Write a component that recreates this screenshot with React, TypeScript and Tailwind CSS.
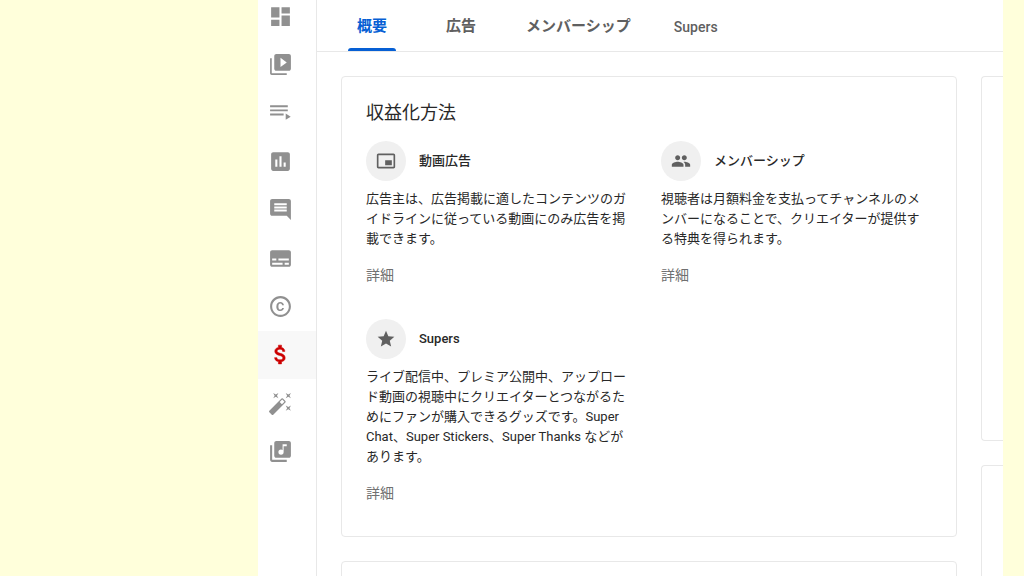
import React, { useState } from 'react';
import type { IconType } from 'react-icons';
import {
  MdAssessment,
  MdAutoFixHigh,
  MdComment,
  MdCopyright,
  MdDashboard,
  MdGroup,
  MdLibraryMusic,
  MdPictureInPictureAlt,
  MdStar,
  MdSubtitles,
} from 'react-icons/md';

interface NavItem {
  id: string;
  label: string;
  icon: React.ReactNode;
}

interface Method {
  title: string;
  description: string;
  icon: IconType;
}

// Stacked frames with a play arrow
const ContentIcon = () => (
  <svg viewBox="0 0 24 24" className="size-[25px]" fill="currentColor">
    <path d="M3.6 6H2v14.4c0 .9.7 1.6 1.6 1.6H18v-1.6H3.6V6z" />
    <path d="M20 2H8c-1.1 0-2 .9-2 2v12c0 1.1.9 2 2 2h12c1.1 0 2-.9 2-2V4c0-1.1-.9-2-2-2zm-8 12.5v-9l6 4.5-6 4.5z" />
  </svg>
);

// Three lines and a small arrow in the corner
const PlaylistIcon = () => (
  <svg viewBox="0 0 24 24" className="size-[25px]" fill="currentColor">
    <path d="M2 5h17v1.9H2zM2 9h17v1.9H2zM2 13h13v1.9H2zM17 13v6l4.8-3z" />
  </svg>
);

const DollarIcon = () => (
  <svg viewBox="0 0 24 24" className="size-[25px]" fill="currentColor" stroke="currentColor" strokeWidth="0.5">
    <path d="M11.8 10.9c-2.27-.59-3-1.2-3-2.15 0-1.09 1.01-1.85 2.7-1.85 1.78 0 2.44.85 2.5 2.1h2.21c-.07-1.72-1.12-3.3-3.21-3.81V3h-3v2.16c-1.94.42-3.5 1.68-3.5 3.61 0 2.31 1.91 3.46 4.7 4.13 2.5.6 3 1.48 3 2.41 0 .69-.49 1.79-2.7 1.79-2.06 0-2.87-.92-2.98-2.1h-2.2c.12 2.19 1.76 3.42 3.68 3.83V21h3v-2.15c1.95-.37 3.5-1.5 3.5-3.55 0-2.84-2.43-3.81-4.7-4.4z" />
  </svg>
);

const navItems: NavItem[] = [
  { id: 'dashboard', label: 'ダッシュボード', icon: <MdDashboard size={25} /> },
  { id: 'content', label: 'コンテンツ', icon: <ContentIcon /> },
  { id: 'playlists', label: '再生リスト', icon: <PlaylistIcon /> },
  { id: 'analytics', label: 'アナリティクス', icon: <MdAssessment size={25} /> },
  { id: 'comments', label: 'コメント', icon: <MdComment size={25} /> },
  { id: 'subtitles', label: '字幕', icon: <MdSubtitles size={25} /> },
  { id: 'copyright', label: '著作権', icon: <MdCopyright size={25} /> },
  { id: 'earn', label: '収益化', icon: <DollarIcon /> },
  { id: 'customize', label: 'カスタマイズ', icon: <MdAutoFixHigh size={25} /> },
  { id: 'audio', label: 'オーディオ ライブラリ', icon: <MdLibraryMusic size={25} /> },
];

const tabs = [
  { name: '概要', font: 'text-[15px] font-bold' },
  { name: '広告', font: 'text-[15px] font-bold' },
  { name: 'メンバーシップ', font: 'text-[15px] font-bold' },
  { name: 'Supers', font: 'text-sm font-medium' },
];

const methods: Method[] = [
  {
    title: '動画広告',
    description: '広告主は、広告掲載に適したコンテンツのガイドラインに従っている動画にのみ広告を掲載できます。',
    icon: MdPictureInPictureAlt,
  },
  {
    title: 'メンバーシップ',
    description: '視聴者は月額料金を支払ってチャンネルのメンバーになることで、クリエイターが提供する特典を得られます。',
    icon: MdGroup,
  },
  {
    title: 'Supers',
    description:
      'ライブ配信中、プレミア公開中、アップロード動画の視聴中にクリエイターとつながるためにファンが購入できるグッズです。Super Chat、Super Stickers、Super Thanks などがあります。',
    icon: MdStar,
  },
];

const Sidebar = () => (
  <nav className="w-[59px] shrink-0 border-r border-[#e8e8e8]">
    <div className="-mt-2 grid h-[484px] grid-rows-10">
      {navItems.map((item) => (
        <a
          key={item.id}
          href={`#${item.id}`}
          aria-label={item.label}
          className={
            item.id === 'earn'
              ? 'flex items-center bg-[#f8f8f8] pl-[10px] text-[#cc0000]'
              : 'flex items-center pl-[10px] text-[#909090]'
          }
        >
          {item.icon}
        </a>
      ))}
    </div>
  </nav>
);

const MethodItem: React.FC<{ method: Method }> = ({ method }) => {
  const Icon = method.icon;

  return (
    <article className="pb-[9px]">
      <div className="flex items-center gap-[13px]">
        <span className="flex size-10 items-center justify-center rounded-full bg-[#f0f0f0] text-[#606060]">
          <Icon size={20} />
        </span>
        <h3 className="text-[13px] leading-5 font-medium">{method.title}</h3>
      </div>
      <p className="mt-2 text-[13px] leading-5">{method.description}</p>
      <a href="#details" className="mt-4 inline-block align-top text-sm leading-5 text-[#707070]">
        詳細
      </a>
    </article>
  );
};

const App: React.FC = () => {
  const [activeTab, setActiveTab] = useState('概要');

  return (
    <div
      lang="ja"
      className="h-screen overflow-hidden bg-[#ffffdb] pr-[21px] pl-[258px] font-['Roboto','Noto_Sans_CJK_JP',sans-serif] text-[#282828]"
    >
      <div className="flex h-full bg-white">
        <Sidebar />

        <div className="min-w-0 flex-1">
          <div role="tablist" className="flex h-[52px] border-b border-[#e8e8e8] pl-[10px]">
            {tabs.map((tab) => (
              <button
                key={tab.name}
                role="tab"
                aria-selected={activeTab === tab.name}
                onClick={() => setActiveTab(tab.name)}
                className={
                  activeTab === tab.name
                    ? 'flex min-w-[88px] flex-col items-center px-[21px] text-[#065fd4]'
                    : 'flex min-w-[88px] flex-col items-center px-[21px] text-[#606060]'
                }
              >
                <span className={`flex h-full items-center pt-0.5 whitespace-nowrap ${tab.font}`}>{tab.name}</span>
                {activeTab === tab.name && (
                  <span className="-mt-[3px] h-[3px] w-12 shrink-0 rounded-t-sm bg-[#065fd4]" />
                )}
              </button>
            ))}
          </div>

          <main className="flex gap-6 pt-6 pl-6">
            <div className="flex min-w-0 flex-1 flex-col gap-6">
              <section className="rounded border border-[#e8e8e8] p-6">
                <h2 className="text-lg leading-6">収益化方法</h2>
                <div className="mt-4 grid grid-cols-2 gap-x-8 gap-y-[25px] pr-2">
                  {methods.map((method) => (
                    <MethodItem key={method.title} method={method} />
                  ))}
                </div>
              </section>
              <section className="h-40 rounded border border-[#e8e8e8]" />
            </div>

            {/* Side cards run past the edge of the panel */}
            <div className="flex w-[22px] shrink-0 flex-col gap-6">
              <section className="h-[365px] rounded-l border border-r-0 border-[#e8e8e8]" />
              <section className="h-64 rounded-l border border-r-0 border-[#e8e8e8]" />
            </div>
          </main>
        </div>
      </div>
    </div>
  );
};

export default App;
